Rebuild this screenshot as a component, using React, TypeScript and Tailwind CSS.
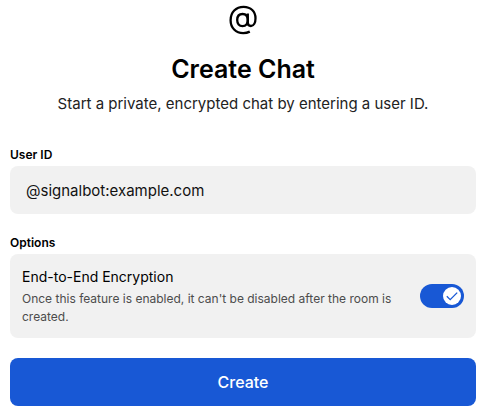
import { useState } from 'react';

function MentionIcon() {
  return (
    <svg
      className="w-8 h-8"
      viewBox="0 0 32 32"
      fill="none"
      stroke="currentColor"
      strokeWidth="2.3"
      strokeLinecap="butt"
      aria-hidden="true"
    >
      <path d="M22.8 28.6C20.8 29.6 18.6 30.1 16.2 30.1C8.8 30.1 3.6 24.8 3.6 17.2C3.6 9.4 8.9 3.8 16.6 3.8C23.8 3.8 28.5 8.5 28.5 15.2C28.5 19.6 26.8 23 23.9 23C21.8 23 20.8 21.7 20.8 19.5V10.4" />
      <path d="M20.8 17C20.8 20.9 18.7 23.1 15.5 23.1C12.2 23.1 10.2 20.9 10.2 17C10.2 13.2 12.3 11 15.6 11C18.8 11 20.8 13.2 20.8 17Z" />
    </svg>
  );
}

export default function App() {
  const [userId, setUserId] = useState('@signalbot:example.com');
  const [encrypted, setEncrypted] = useState(true);

  return (
    <div className="w-full bg-white text-black font-['Inter',sans-serif] pt-[3px] pl-2.5 pr-1 pb-2">
      <header className="flex flex-col items-center text-center">
        <MentionIcon />
        <h1 className="mt-[18px] text-[25px] leading-8 font-semibold">Create Chat</h1>
        <p className="mt-[7px] text-[15px] leading-6 text-[#222222]">
          Start a private, encrypted chat by entering a user ID.
        </p>
      </header>

      <form className="mt-[30px] flex flex-col gap-5" onSubmit={(e) => e.preventDefault()}>
        <div className="flex flex-col gap-[3px]">
          <label htmlFor="user-id" className="pt-px text-xs leading-4 font-semibold">
            User ID
          </label>
          <input
            id="user-id"
            type="text"
            value={userId}
            onChange={(e) => setUserId(e.target.value)}
            className="w-full h-12 px-4 rounded-lg bg-[#f1f1f1] text-[15px] text-[#111111] outline-none"
          />
        </div>

        <div className="flex flex-col gap-[3px]">
          <h2 className="pt-px text-xs leading-4 font-semibold">Options</h2>
          <div className="flex items-center gap-5 p-3 rounded-lg bg-[#f1f1f1]">
            <div className="grow">
              <label htmlFor="encryption" className="block mb-0.5 text-sm leading-[22px]">
                End-to-End Encryption
              </label>
              <p id="encryption-hint" className="text-xs leading-[18px] text-[#4c4c4c]">
                Once this feature is enabled, it can't be disabled after the room is created.
              </p>
            </div>
            <label className="shrink-0 flex items-center w-11 h-6 p-[3px] rounded-full bg-gray-400 has-checked:bg-[#1858d5] has-checked:justify-end cursor-pointer">
              <input
                id="encryption"
                type="checkbox"
                role="switch"
                aria-describedby="encryption-hint"
                checked={encrypted}
                onChange={(e) => setEncrypted(e.target.checked)}
                className="sr-only peer"
              />
              <span className="flex items-center justify-center size-[18px] rounded-full bg-white text-transparent peer-checked:text-[#1858d5]">
                <svg className="size-4" viewBox="0 0 16 16" fill="none" stroke="currentColor" strokeWidth="1.3">
                  <path d="M2.8 8.2L6.2 11.6L13.2 4.6" />
                </svg>
              </span>
            </label>
          </div>
        </div>

        <button
          type="submit"
          className="w-full h-12 rounded-lg bg-[#1858d5] text-white text-base font-medium cursor-pointer"
        >
          Create
        </button>
      </form>
    </div>
  );
}
